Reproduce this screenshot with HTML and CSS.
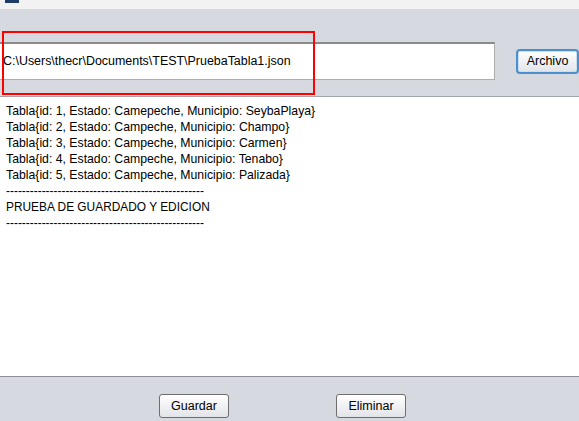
FILE: index.html
```html
<!DOCTYPE html>
<html>
<head>
<meta charset="utf-8">
<link rel="stylesheet" href="styles.css">
</head>
<body>
<div class="window">
  <div class="titlebar"><span class="app-icon"></span></div>
  <div class="top-panel">
    <div class="file-row">
      <div class="path-field">C:\Users\thecr\Documents\TEST\PruebaTabla1.json</div>
      <button class="btn btn-focus">Archivo</button>
    </div>
    <div class="highlight"></div>
  </div>
  <div class="output">
    <div class="line">Tabla{id: 1, Estado: Camepeche, Municipio: SeybaPlaya}</div>
    <div class="line">Tabla{id: 2, Estado: Campeche, Municipio: Champo}</div>
    <div class="line">Tabla{id: 3, Estado: Campeche, Municipio: Carmen}</div>
    <div class="line">Tabla{id: 4, Estado: Campeche, Municipio: Tenabo}</div>
    <div class="line">Tabla{id: 5, Estado: Campeche, Municipio: Palizada}</div>
    <div class="line line-narrow">--------------------------------------------------</div>
    <div class="line line-narrow">PRUEBA DE GUARDADO Y EDICION</div>
    <div class="line line-narrow">--------------------------------------------------</div>
  </div>
  <div class="bottom-panel">
    <button class="btn btn-guardar">Guardar</button>
    <button class="btn btn-eliminar">Eliminar</button>
  </div>
</div>
</body>
</html>
```
FILE: styles.css
```css
html, body {
  margin: 0;
  padding: 0;
  background: #d6d9df;
}
body {
  font-family: "Liberation Sans", Arial, sans-serif;
  font-size: 12px;
  color: #000;
}
.window {
  width: 579px;
  height: 421px;
  display: flex;
  flex-direction: column;
  overflow: hidden;
}
.titlebar {
  height: 9px;
  background: #f2f2f2;
  display: flex;
  align-items: flex-start;
}
.app-icon {
  margin-left: 5px;
  width: 14px;
  height: 3px;
  background: #1d3b63;
}
.top-panel {
  position: relative;
  background: #d6d9df;
  border-bottom: 1px solid #a3a6ad;
  box-sizing: border-box;
  height: 88px;
}
.file-row {
  display: flex;
  align-items: center;
  padding-top: 33px;
}
.path-field {
  width: 495px;
  height: 38px;
  box-sizing: border-box;
  background: #fff;
  border: 1px solid #adadad;
  border-top: 2px solid #8a8a8a;
  border-left: none;
  padding-left: 3px;
  line-height: 35px;
  font-size: 12.45px;
  white-space: nowrap;
}
.btn {
  font-family: "Liberation Sans", Arial, sans-serif;
  font-size: 12.5px;
  color: #000;
  height: 24px;
  padding: 0;
  border: 1px solid #6e6e6e;
  border-radius: 3px;
  background: linear-gradient(#ffffff, #e3e4e8);
}
.btn-focus {
  margin-left: 21px;
  width: 63px;
  height: 25px;
  border: 2px solid #4b8fcf;
  box-shadow: inset 0 0 0 1px #c9def2;
  border-radius: 4px;
  margin-right: -1px;
}
.highlight {
  position: absolute;
  left: 2px;
  top: 22px;
  width: 313px;
  height: 64px;
  box-sizing: border-box;
  border: 2px solid #f00;
}
.output {
  background: #fff;
  height: 280px;
  box-sizing: border-box;
  padding: 6px 0 0 6px;
  border-bottom: 1px solid #8e8f9b;
}
.line {
  height: 16px;
  line-height: 16px;
  font-size: 12.25px;
  white-space: nowrap;
}
.line-narrow {
  font-size: 11.9px;
}
.bottom-panel {
  flex: 1;
  display: flex;
  align-items: flex-start;
  padding-top: 17px;
  padding-left: 159px;
}
.btn-guardar {
  width: 70px;
}
.btn-eliminar {
  width: 70px;
  margin-left: 107px;
}
```
